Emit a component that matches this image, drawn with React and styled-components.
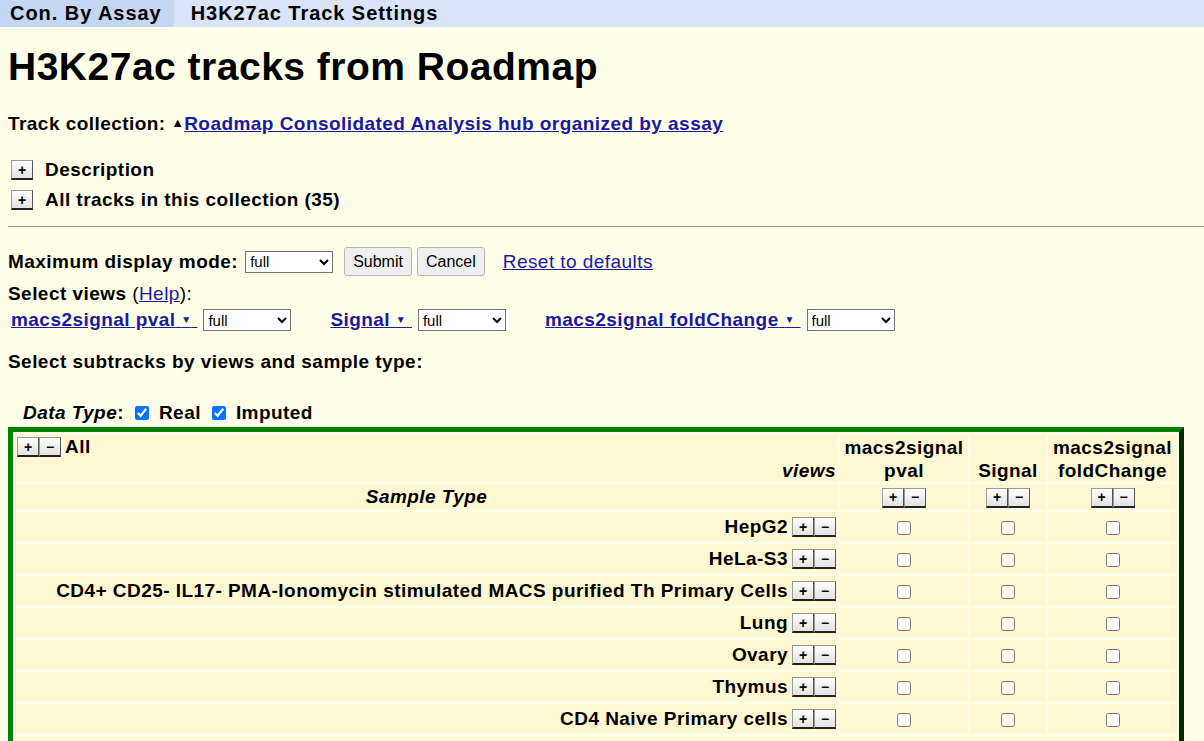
import React from 'react';
import styled, { createGlobalStyle } from 'styled-components';

const GlobalStyle = createGlobalStyle`
  body {
    margin: 0;
    background: #fffee8;
    font-family: Arial, "Liberation Sans", sans-serif;
    color: #000;
  }
`;

const rows = [
  'HepG2',
  'HeLa-S3',
  'CD4+ CD25- IL17- PMA-Ionomycin stimulated MACS purified Th Primary Cells',
  'Lung',
  'Ovary',
  'Thymus',
  'CD4 Naive Primary cells',
  'Fetal Brain',
];

const views = [
  { name: 'macs2signal pval', head: ['macs2signal', 'pval'], width: 124 },
  { name: 'Signal', head: ['Signal'], width: 72 },
  { name: 'macs2signal foldChange', head: ['macs2signal', 'foldChange'], width: 125 },
];

function PlusMinus({ only }) {
  return (
    <BtnPair>
      <PmBox>+</PmBox>
      {!only && <PmBox>−</PmBox>}
    </BtnPair>
  );
}

export default function App() {
  return (
    <>
      <GlobalStyle />
      <TopBar>
        <Tab active>Con. By Assay</Tab>
        <Tab>H3K27ac Track Settings</Tab>
      </TopBar>
      <Page>
        <Title>H3K27ac tracks from Roadmap</Title>
        <Line>
          Track collection: <Tri>▲</Tri>
          <Link href="#">Roadmap Consolidated Analysis hub organized by assay</Link>
        </Line>
        <Toggles>
          <Toggle>
            <PlusMinus only />
            <span>Description</span>
          </Toggle>
          <Toggle>
            <PlusMinus only />
            <span>All tracks in this collection (35)</span>
          </Toggle>
        </Toggles>
        <Rule />
        <ModeRow>
          Maximum display mode:
          <Select width={88}>
            <option>full</option>
          </Select>
          <Button>Submit</Button>
          <Button>Cancel</Button>
          <PlainLink href="#">Reset to defaults</PlainLink>
        </ModeRow>
        <Line gap={4}>
          Select views <Thin>(</Thin>
          <PlainLink href="#" inline>Help</PlainLink>
          <Thin>):</Thin>
        </Line>
        <ViewsRow>
          {views.map((v) => (
            <ViewItem key={v.name}>
              <Link href="#">
                {v.name}&nbsp;<Caret>▼</Caret>&nbsp;
              </Link>
              <Select width={88}>
                <option>full</option>
              </Select>
            </ViewItem>
          ))}
        </ViewsRow>
        <Line>Select subtracks by views and sample type:</Line>
        <DataType>
          <span>
            <em>Data Type</em>:
          </span>
          <Check type="checkbox" defaultChecked /> Real
          <Check type="checkbox" defaultChecked /> Imputed
        </DataType>
        <Matrix>
          <tbody>
            <tr>
              <HeadCell>
                <AllRow>
                  <PlusMinus />
                  All
                </AllRow>
                <ViewsLabel>views</ViewsLabel>
              </HeadCell>
              {views.map((v) => (
                <ViewHead key={v.name} style={{ width: v.width }}>
                  {v.head.map((h) => (
                    <div key={h}>{h}</div>
                  ))}
                </ViewHead>
              ))}
            </tr>
            <tr>
              <SampleHead>Sample Type</SampleHead>
              {views.map((v) => (
                <CheckCell key={v.name}>
                  <PlusMinus />
                </CheckCell>
              ))}
            </tr>
            {rows.map((r) => (
              <tr key={r}>
                <LabelCell>
                  <SampleName>{r}</SampleName>
                  <PlusMinus />
                </LabelCell>
                {views.map((v) => (
                  <CheckCell key={v.name}>
                    <Box type="checkbox" />
                  </CheckCell>
                ))}
              </tr>
            ))}
          </tbody>
        </Matrix>
      </Page>
    </>
  );
}

const TopBar = styled.div`
  display: flex;
  background: #d9e4f8;
  height: 27px;
  align-items: stretch;
`;

const Tab = styled.div`
  display: flex;
  align-items: center;
  padding: 0 12px 0 10px;
  margin-right: 7px;
  font-size: 20px;
  font-weight: bold;
  letter-spacing: 0.95px;
  background: ${(p) => (p.active ? '#c4d6f4' : 'transparent')};
`;

const Page = styled.div`
  padding: 0 0 0 8px;
  font-size: 19px;
  font-weight: bold;
  letter-spacing: 0.45px;
`;

const Title = styled.h1`
  font-size: 39px;
  letter-spacing: 0.5px;
  margin: 17px 0 22px;
  line-height: 46px;
`;

const Line = styled.div`
  line-height: 22px;
  margin-bottom: ${(p) => (p.gap || 0)}px;
`;

const Thin = styled.span`
  font-weight: normal;
`;

const Tri = styled.span`
  font-size: 13px;
  vertical-align: 3px;
  letter-spacing: 0;
`;

const Link = styled.a`
  color: #1a1aa0;
  text-decoration: underline;
  font-weight: bold;
`;

const PlainLink = styled.a`
  color: #1a1aa0;
  font-weight: normal;
  text-decoration: underline;
  margin-left: ${(p) => (p.inline ? '0' : '13px')};
`;

const Caret = styled.span`
  font-size: 10px;
  vertical-align: 3px;
`;

const Toggles = styled.div`
  margin: 24px 0 0 3px;
  display: flex;
  flex-direction: column;
  gap: 8px;
`;

const Toggle = styled.div`
  display: flex;
  align-items: center;
  gap: 12px;
  line-height: 22px;
`;

const BtnPair = styled.span`
  display: inline-flex;
  vertical-align: middle;
  flex: none;
`;

const PmBox = styled.span`
  width: 20px;
  height: 17px;
  display: inline-flex;
  align-items: center;
  justify-content: center;
  font: bold 14px Arial, "Liberation Sans", sans-serif;
  letter-spacing: 0;
  color: #000;
  background: linear-gradient(#ffffff, #e2e2e2);
  border: 1px solid #9a9a9a;
  border-bottom: 2px solid #222;
  border-right-color: #555;
  line-height: 1;
`;

const Rule = styled.hr`
  margin: 15px 0 20px;
  border: none;
  border-top: 1px solid #9e9e9e;
`;

const ModeRow = styled.div`
  display: flex;
  align-items: center;
  gap: 7px;
  margin-bottom: 7px;
`;

const Select = styled.select`
  width: ${(p) => p.width}px;
  height: 22px;
  font: 15px Arial, "Liberation Sans", sans-serif;
  background: #fff;
  border: 1px solid #767676;
  border-radius: 0;
  margin: 0 4px 0 0;
`;

const Button = styled.button`
  font: 16px Arial, "Liberation Sans", sans-serif;
  height: 29px;
  padding: 0 8px;
  margin-right: -2px;
  background: #efefef;
  border: 1px solid #b5b5b5;
  border-radius: 3px;
`;

const ViewsRow = styled.div`
  display: flex;
  gap: 35px;
  padding-left: 3px;
  margin-bottom: 20px;
`;

const ViewItem = styled.div`
  display: flex;
  align-items: center;
  gap: 6px;
`;

const DataType = styled.div`
  margin: 29px 0 3px 15px;
  display: flex;
  align-items: center;
  gap: 6px;
  em {
    font-style: italic;
  }
`;

const Check = styled.input`
  width: 14px;
  height: 14px;
  margin: 0 4px 0 5px;
  accent-color: #0075ff;
`;

const Matrix = styled.table`
  width: 1176px;
  border: 5px outset #008000;
  border-spacing: 2px;
  border-collapse: separate;
  td, th {
    background: #fff8d2;
    padding: 0 2px;
  }
`;

const HeadCell = styled.th`
  height: 46px;
  vertical-align: top;
  text-align: left;
`;

const AllRow = styled.div`
  display: flex;
  align-items: center;
  gap: 4px;
  font-size: 19px;
  padding-top: 2px;
`;

const ViewsLabel = styled.div`
  text-align: right;
  font-style: italic;
  margin-top: 2px;
`;

const ViewHead = styled.th`
  text-align: center;
  vertical-align: bottom;
  line-height: 23px;
  padding: 0 4px;
`;

const SampleHead = styled.th`
  font-style: italic;
  height: 26px;
  text-align: center;
`;

const LabelCell = styled.td`
  height: 30px;
  text-align: right;
  white-space: nowrap;
`;

const SampleName = styled.span`
  vertical-align: middle;
  margin-right: 4px;
`;

const CheckCell = styled.td`
  text-align: center;
  vertical-align: middle;
`;

const Box = styled.input`
  width: 14px;
  height: 14px;
  margin: 0;
  vertical-align: middle;
`;
